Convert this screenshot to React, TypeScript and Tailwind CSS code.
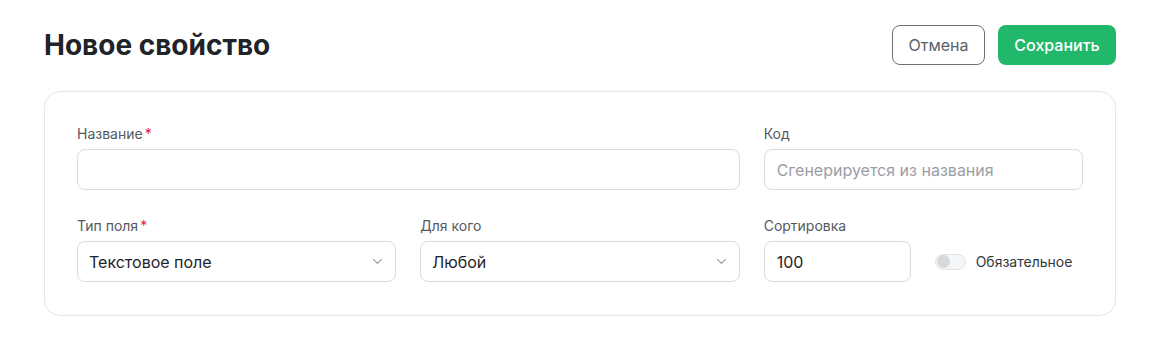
import { ChevronDown } from "lucide-react";

function Label({ text, required }: { text: string; required?: boolean }) {
  return (
    <div className="mb-[5px] text-[14px] leading-5 text-[#55595f]">
      {text}
      {required && <span className="ml-[2px] text-[#e5252a]">*</span>}
    </div>
  );
}

function Select({ value }: { value: string }) {
  return (
    <div className="flex h-[41px] items-center justify-between rounded-lg border border-[#d9dcdf] bg-white pl-[11px] pr-[10px]">
      <span className="text-[16px] text-[#1f2328]">{value}</span>
      <ChevronDown className="h-[15px] w-[15px] text-[#9a9ea4]" strokeWidth={2} />
    </div>
  );
}

export default function App() {
  return (
    <div
      className="min-h-[340px] bg-white px-[44px] pt-[25px]"
      style={{ fontFamily: "Inter, 'Noto Sans', sans-serif" }}
    >
      <div className="flex items-center justify-between">
        <h1 className="text-[28px] font-bold leading-10 text-[#202327]">Новое свойство</h1>
        <div className="flex gap-[13px]">
          <button className="h-10 w-[93px] rounded-lg border border-[#6b7078] bg-white text-[16px] text-[#5b6068]">
            Отмена
          </button>
          <button className="h-10 w-[118px] rounded-lg bg-[#22b86b] text-[16px] font-medium text-white">
            Сохранить
          </button>
        </div>
      </div>

      <div className="mt-[26px] rounded-2xl border border-[#e4e6e8] px-8 pb-[33px] pt-8">
        <div className="grid grid-cols-3 gap-x-6 gap-y-[26px]">
          <div className="col-span-2">
            <Label text="Название" required />
            <input className="h-[41px] w-full rounded-lg border border-[#d9dcdf] px-3 text-[16px] outline-none" />
          </div>
          <div>
            <Label text="Код" />
            <input
              placeholder="Сгенерируется из названия"
              className="h-[41px] w-full rounded-lg border border-[#d9dcdf] px-3 text-[16px] outline-none placeholder:text-[#9a9ea4]"
            />
          </div>

          <div>
            <Label text="Тип поля" required />
            <Select value="Текстовое поле" />
          </div>
          <div>
            <Label text="Для кого" />
            <Select value="Любой" />
          </div>
          <div className="flex items-end gap-6">
            <div className="w-[147px]">
              <Label text="Сортировка" />
              <input
                defaultValue="100"
                className="h-[41px] w-full rounded-lg border border-[#d9dcdf] px-3 text-[16px] text-[#1f2328] outline-none"
              />
            </div>
            <div className="flex h-[41px] items-center gap-[10px]">
              <div className="flex h-[16px] w-[31px] items-center rounded-full border border-[#e1e3e5] bg-[#f5f6f7] px-[1px]">
                <div className="h-[13px] w-[13px] rounded-full bg-[#d6d8db]" />
              </div>
              <span className="text-[14px] text-[#33373c]">Обязательное</span>
            </div>
          </div>
        </div>
      </div>
    </div>
  );
}
